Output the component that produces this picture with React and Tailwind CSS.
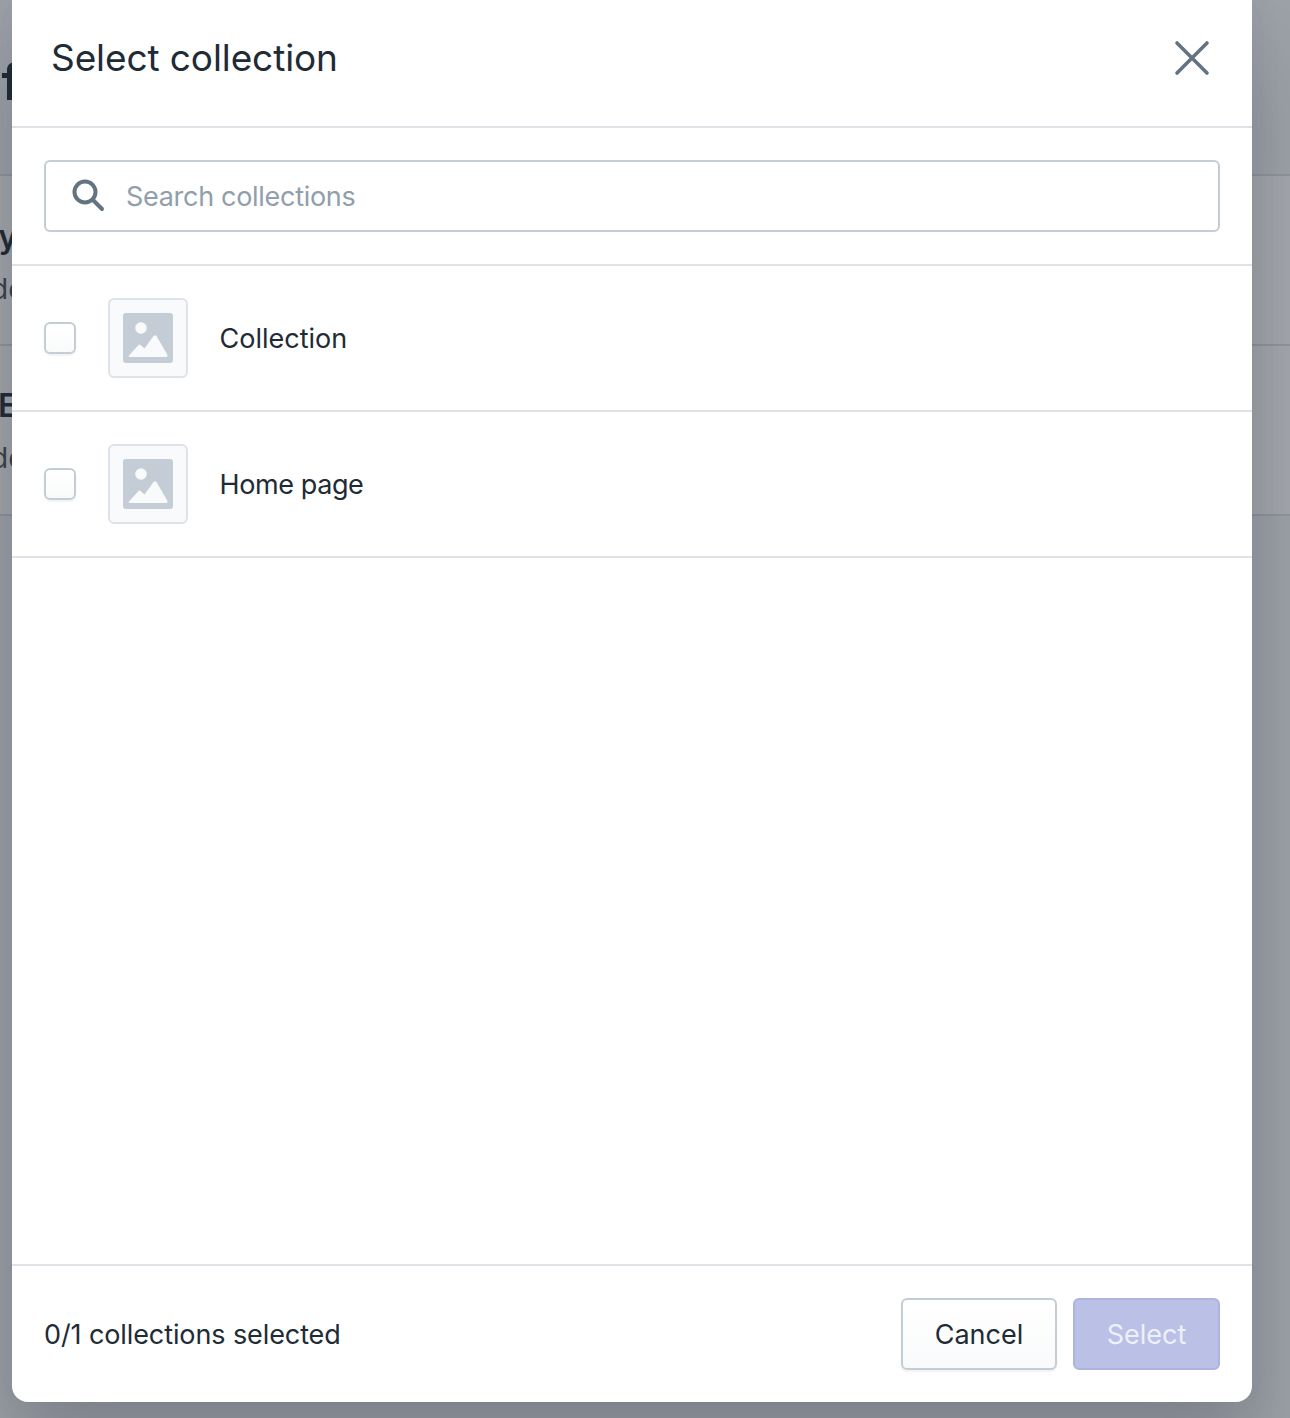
function ImagePlaceholder() {
  return (
    <div className="flex h-20 w-20 items-center justify-center rounded-[6px] border-2 border-[#dfe3e8] bg-[#f9fafb]">
      <svg width="50" height="50" viewBox="0 0 50 50" aria-hidden="true">
        <rect width="50" height="50" rx="3" fill="#c4cdd5" />
        <circle cx="18" cy="15" r="5.8" fill="#f9fafb" />
        <path
          d="M6 42.5 L15.5 32 Q16.5 31 17.5 32 L21.5 35.5 L30.5 23 Q32 21.5 33.5 23 L44.5 42 Q45 44 43 44 H7 Q5 44 6 42.5 Z"
          fill="#f9fafb"
        />
      </svg>
    </div>
  );
}

function Row({ label, tracking }) {
  return (
    <div className="flex h-[146px] items-center border-b-2 border-[#dfe3e8] pl-8">
      <div className="h-8 w-8 rounded-[6px] border-2 border-[#c4cdd5] bg-gradient-to-b from-white to-[#f9fafb] shadow-[0_2px_2px_rgba(22,29,37,0.05)]" />
      <div className="ml-8">
        <ImagePlaceholder />
      </div>
      <span className={`ml-[31.5px] pt-[2px] text-[27px] leading-10 text-[#212b36] ${tracking}`}>{label}</span>
    </div>
  );
}

function Card({ title, titleClass }) {
  return (
    <section className="h-[170px] border-b-2 border-[#90949b] bg-[#a3a6ab]">
      <div className="w-3 overflow-hidden whitespace-nowrap text-[#212b36]">
        <div className={`text-[32px] leading-10 font-semibold ${titleClass}`}>{title}</div>
        <div className="mt-3 -ml-[9px] text-[28px] leading-10 text-[#3a424c]">de</div>
      </div>
    </section>
  );
}

export default function App() {
  return (
    <div className="relative h-[1418px] w-[1290px] overflow-hidden bg-[#9ca0a7] font-['Inter','Liberation_Sans',sans-serif]">
      <div className="h-[176px] border-b-2 border-[#90949b]">
        <div className="w-3 overflow-hidden pt-[50px] text-[50px] leading-[64px] font-semibold whitespace-nowrap text-[#212b36]">
          <span className="-ml-[29px] inline-block">of</span>
        </div>
      </div>
      <Card title="uy" titleClass="-ml-[21px] pt-[41px]" />
      <Card title="E" titleClass="-ml-[2px] pt-[40px]" />

      <div className="absolute top-0 left-3 flex h-[1402px] w-[1240px] flex-col rounded-b-[16px] bg-white shadow-[0_62px_82px_rgba(32,42,53,0.2),0_4px_32px_rgba(32,42,54,0.08)]">
        <header className="flex h-[128px] shrink-0 items-center justify-between border-b-2 border-[#dfe3e8] pr-[40px] pb-[10px] pl-[39px]">
          <h1 className="text-[37px] leading-[48px] font-normal tracking-[-0.1px] text-[#212b36]">Select collection</h1>
          <svg width="40" height="40" viewBox="0 0 40 40" aria-hidden="true">
            <path d="M5 5 L35 35 M35 5 L5 35" stroke="#637381" strokeWidth="3.6" strokeLinecap="round" />
          </svg>
        </header>
        <div className="shrink-0 border-b-2 border-[#dfe3e8] px-8 py-8">
          <div className="flex h-[72px] items-center rounded-[6px] border-2 border-[#c4cdd5] bg-white pl-[25px]">
            <svg className="-translate-y-px" width="34" height="34" viewBox="0 0 34 34" aria-hidden="true">
              <circle cx="14" cy="14" r="10.5" fill="none" stroke="#637381" strokeWidth="4" />
              <path d="M22 22 L31 31" stroke="#637381" strokeWidth="4" strokeLinecap="round" />
            </svg>
            <span className="ml-[21px] pt-[2px] text-[27px] leading-10 tracking-[-0.3px] text-[#919eab]">Search collections</span>
          </div>
        </div>
        <Row label="Collection" tracking="" />
        <Row label="Home page" tracking="tracking-[-0.4px]" />
        <div className="flex-1" />
        <footer className="flex h-[138px] shrink-0 items-center justify-between border-t-2 border-[#dfe3e8] px-8">
          <span className="pt-[2px] text-[27px] leading-10 tracking-[-0.1px] text-[#212b36]">0/1 collections selected</span>
          <div className="flex gap-4">
            <button className="h-[72px] w-[156px] rounded-[6px] border-2 border-[#c4cdd5] bg-gradient-to-b from-white to-[#f9fafb] pt-[2px] text-[27px] text-[#212b36] shadow-[0_2px_2px_rgba(22,29,37,0.05)]">
              Cancel
            </button>
            <button className="h-[72px] w-[147px] rounded-[6px] border-2 border-[#aeb4e0] bg-[#bac0e6] pt-[2px] text-[27px] text-[#eef0fa]">
              Select
            </button>
          </div>
        </footer>
      </div>
    </div>
  );
}
